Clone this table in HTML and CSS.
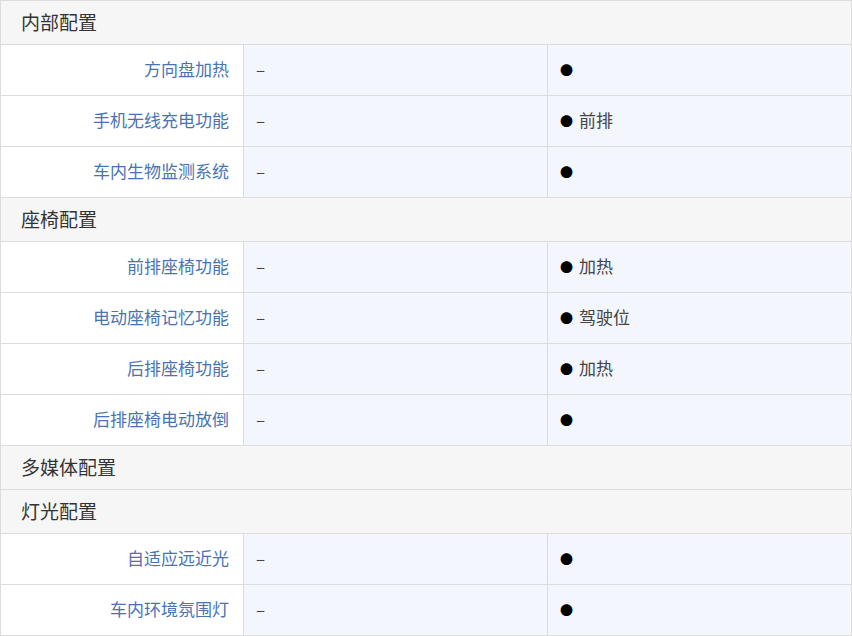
FILE: index.html
```html
<!DOCTYPE html>
<html lang="zh">
<head>
<meta charset="utf-8">
<link rel="stylesheet" href="styles.css">
</head>
<body>
<table class="spec">
  <colgroup><col class="c-label"><col class="c-val"><col class="c-val"></colgroup>
  <tbody>
    <tr class="sec"><td colspan="3">内部配置</td></tr>
    <tr><td class="label">方向盘加热</td><td class="val">–</td><td class="val"><span class="dot">●</span></td></tr>
    <tr><td class="label">手机无线充电功能</td><td class="val">–</td><td class="val"><span class="dot">●</span>前排</td></tr>
    <tr><td class="label">车内生物监测系统</td><td class="val">–</td><td class="val"><span class="dot">●</span></td></tr>
    <tr class="sec"><td colspan="3">座椅配置</td></tr>
    <tr><td class="label">前排座椅功能</td><td class="val">–</td><td class="val"><span class="dot">●</span>加热</td></tr>
    <tr><td class="label">电动座椅记忆功能</td><td class="val">–</td><td class="val"><span class="dot">●</span>驾驶位</td></tr>
    <tr><td class="label">后排座椅功能</td><td class="val">–</td><td class="val"><span class="dot">●</span>加热</td></tr>
    <tr><td class="label">后排座椅电动放倒</td><td class="val">–</td><td class="val"><span class="dot">●</span></td></tr>
    <tr class="sec"><td colspan="3">多媒体配置</td></tr>
    <tr class="sec"><td colspan="3">灯光配置</td></tr>
    <tr><td class="label">自适应远近光</td><td class="val">–</td><td class="val"><span class="dot">●</span></td></tr>
    <tr><td class="label">车内环境氛围灯</td><td class="val">–</td><td class="val"><span class="dot">●</span></td></tr>
  </tbody>
</table>
</body>
</html>
```
FILE: styles.css
```css
html, body {
  margin: 0;
  padding: 0;
  background: #ffffff;
}
body {
  font-family: "Noto Sans CJK SC", "Noto Sans", sans-serif;
}
.spec {
  border-collapse: collapse;
  table-layout: fixed;
  width: 852px;
}
.c-label { width: 243px; }
.c-val { width: 304px; }
.spec td {
  border: 1px solid #dcdcdc;
  padding: 0 0 3px 0;
  box-sizing: border-box;
  white-space: nowrap;
}
.sec td {
  height: 44px;
  background: #f6f6f6;
  color: #333333;
  font-size: 19px;
  padding-left: 20px;
  padding-bottom: 2px;
}
.label {
  height: 51px;
  text-align: right;
  padding-right: 14px !important;
  color: #4a73b3;
  font-size: 17px;
  background: #ffffff;
}
.val {
  background: #f3f6fd;
  color: #444444;
  font-size: 17px;
  padding-left: 12px !important;
}
.dot {
  display: inline-block;
  color: #000000;
  font-size: 13px;
  margin-right: 6px;
  vertical-align: 1px;
}
```
